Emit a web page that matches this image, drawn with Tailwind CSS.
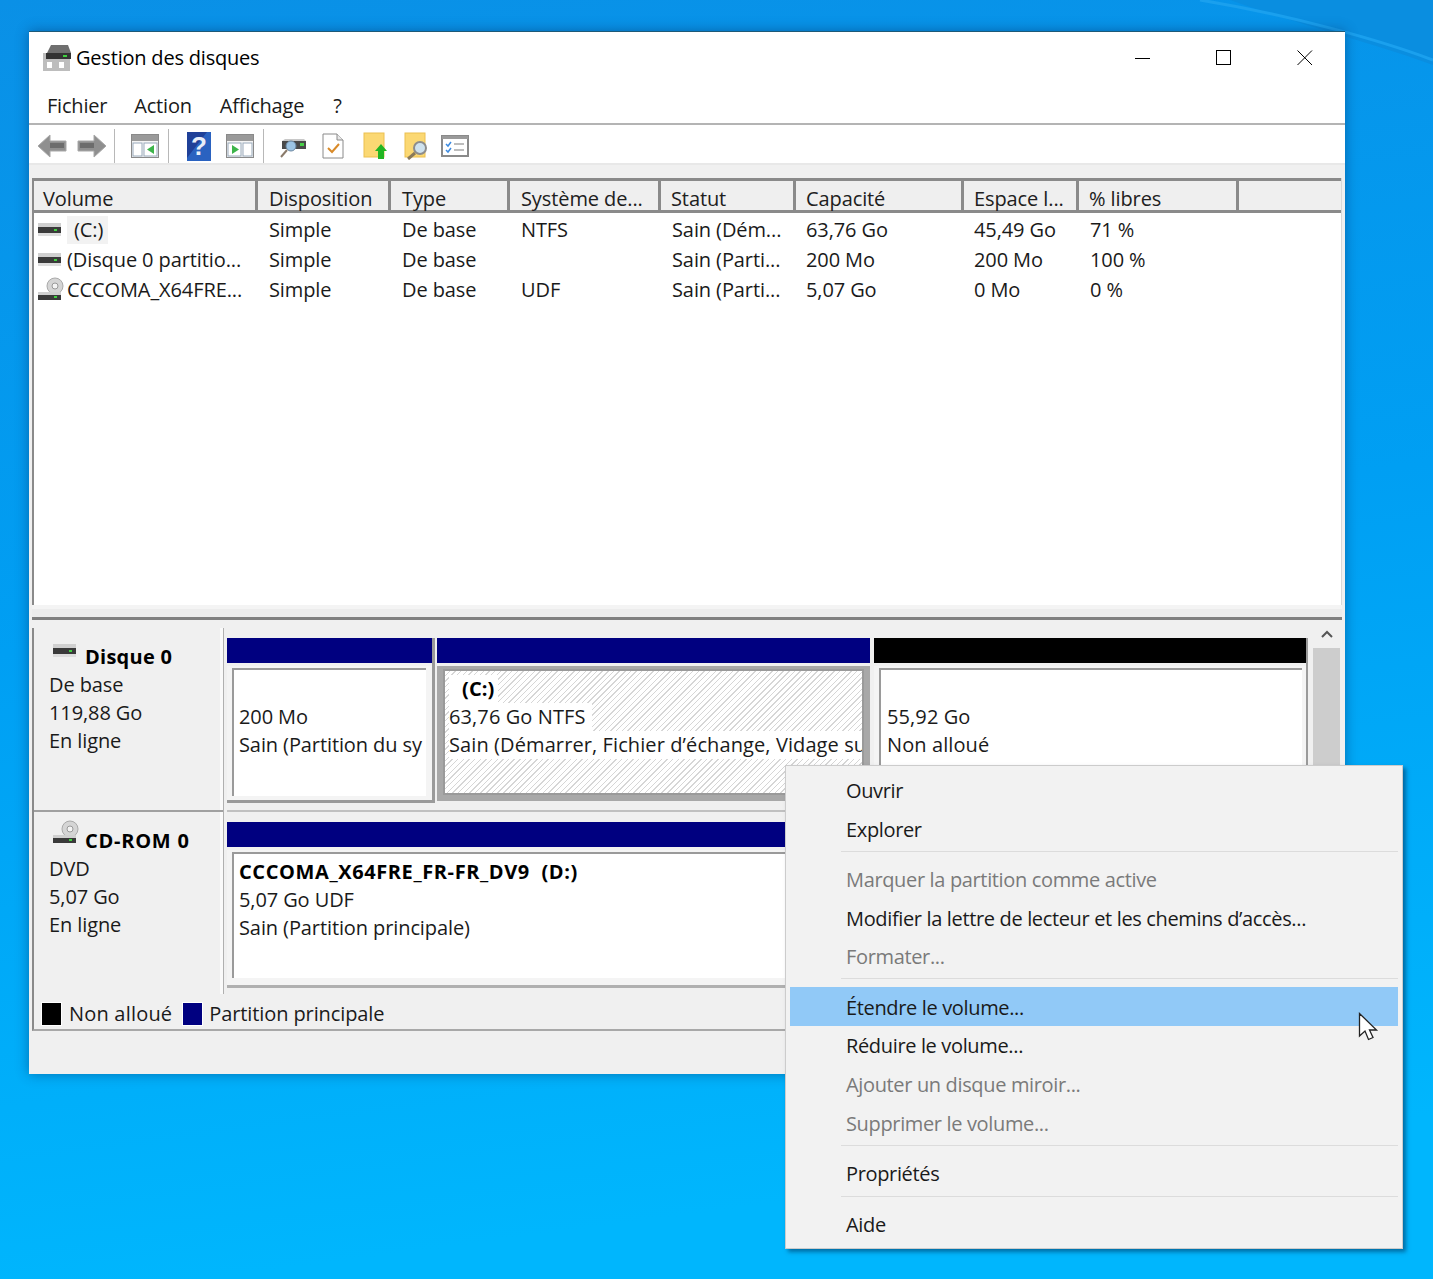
<!DOCTYPE html>
<html lang="fr">
<head>
<meta charset="UTF-8">
<title>Gestion des disques</title>
<script src="https://cdn.jsdelivr.net/npm/@tailwindcss/browser@4"></script>
</head>
<body class="w-[1433px] h-[1279px] overflow-hidden relative bg-[#00a2f5] font-['Open_Sans',sans-serif] text-[20px] leading-[28px] text-[#1a1a1a] tracking-[-0.1px]">
<svg class="absolute inset-0" width="1433" height="1279"><defs><linearGradient id="bg" x1="0" y1="0" x2="0.15" y2="1"><stop offset="0" stop-color="#0a90e6"/><stop offset=".5" stop-color="#009ff3"/><stop offset="1" stop-color="#00b6fd"/></linearGradient></defs><rect width="1433" height="1279" fill="url(#bg)"/><path d="M1230 0C1300 25 1380 45 1433 65V0Z" fill="#0a8ee0"/><path d="M1200 0C1290 15 1380 40 1433 60" stroke="#1aa0ee" stroke-width="3" fill="none"/></svg>

<!-- fenetre -->
<div class="absolute left-[29px] top-[31px] w-[1316px] h-[1043px] bg-[#f0f0f0] flex flex-col shadow-[0_0_12px_rgba(0,40,90,0.45)] border-t border-[#1e5a78]">
  <div class="h-[52px] bg-white flex items-center shrink-0">
    <svg class="ml-[13px]" width="30" height="28" viewBox="0 0 30 28"><path d="M5 9 9 1H26L29 9V11H5Z" fill="#6f6f6f"/><rect x="1" y="9" width="27" height="18" fill="#bdbdbd"/><rect x="4" y="9" width="25" height="6" fill="#333"/><rect x="21" y="11" width="4" height="2" fill="#3fd03f"/><rect x="5" y="18" width="5" height="6" fill="#fff"/><rect x="17" y="18" width="5" height="6" fill="#fff"/></svg>
    <span class="ml-[4px] text-[#000] tracking-[-0.2px]">Gestion des disques</span>
    <div class="ml-auto flex items-center">
      <div class="w-[81px] h-[52px] flex items-center justify-center"><svg width="16" height="16"><path d="M0 8.500H15" stroke="#000"/></svg></div>
      <div class="w-[81px] h-[52px] flex items-center justify-center"><svg width="16" height="16"><rect x=".5" y=".5" width="14" height="14" fill="none" stroke="#000"/></svg></div>
      <div class="w-[81px] h-[52px] flex items-center justify-center"><svg width="16" height="16"><path d="M.5.5 15 15M15 .5 .5 15" stroke="#000"/></svg></div>
    </div>
  </div>
  <div class="h-[41px] bg-white flex items-center pl-[18px] gap-[27px] shrink-0 border-b-2 border-[#b4b4b4] pt-[4px] tracking-[-0.2px]">
    <span>Fichier</span><span>Action</span><span class="ml-[1px]">Affichage</span><span class="ml-[2px]">?</span>
  </div>
  <div class="h-[40px] bg-white flex items-center shrink-0 border-b-2 border-[#e8e8e8] pt-[4px]">
    <svg class="ml-[8px]" width="30" height="26" viewBox="0 0 30 26"><path d="M1 13 13 2V8H29V18H13V24Z" fill="#8f8f8f" stroke="#a8a8a8"/><rect x="13" y="10" width="14" height="5" fill="#6c6c6c"/></svg>
    <svg class="ml-[10px]" width="30" height="26" viewBox="0 0 30 26"><path d="M29 13 17 2V8H1V18H17V24Z" fill="#8f8f8f" stroke="#a8a8a8"/><rect x="3" y="10" width="14" height="5" fill="#6c6c6c"/></svg>
    <div class="ml-[7px] w-px h-[34px] bg-[#b8b8b8]"></div>
    <svg class="ml-[16px]" width="28" height="24" viewBox="0 0 28 24"><rect x=".5" y=".5" width="27" height="23" fill="#f4f4f4" stroke="#8a8a8a"/><rect x="1" y="1" width="26" height="6" fill="#9a9a9a"/><rect x="2" y="9" width="9" height="13" fill="#fff" stroke="#9ab"/><rect x="13" y="9" width="13" height="13" fill="#fff" stroke="#9ab"/><path d="M23 11V20L16 15.500Z" fill="#3cb44a"/></svg>
    <div class="ml-[9px] w-px h-[34px] bg-[#b8b8b8]"></div>
    <svg class="ml-[18px]" width="24" height="29" viewBox="0 0 24 29"><rect width="24" height="29" fill="#1f4098"/><path d="M20 0H24V29H0V26Z" fill="#2a62c0"/><text x="12" y="23" text-anchor="middle" font-size="26" font-weight="700" fill="#e8eef8" font-family="Liberation Sans">?</text></svg>
    <svg class="ml-[15px]" width="28" height="24" viewBox="0 0 28 24"><rect x=".5" y=".5" width="27" height="23" fill="#f4f4f4" stroke="#8a8a8a"/><rect x="1" y="1" width="26" height="6" fill="#9a9a9a"/><rect x="2" y="9" width="13" height="13" fill="#fff" stroke="#9ab"/><rect x="17" y="9" width="9" height="13" fill="#fff" stroke="#9ab"/><path d="M6 11V20L13 15.500Z" fill="#3cb44a"/></svg>
    <div class="ml-[9px] w-px h-[34px] bg-[#b8b8b8]"></div>
    <svg class="ml-[16px]" width="28" height="26" viewBox="0 0 28 26"><path d="M2 8H26V16H2Z" fill="#4a4a4a"/><path d="M5 6H24L26 8H2Z" fill="#c8c8c8"/><rect x="20" y="10" width="4" height="3" fill="#48d048"/><circle cx="11" cy="13" r="5" fill="#9cc4e4" stroke="#6a86a0"/><path d="M7 17 1 24" stroke="#8a7a6a" stroke-width="2"/></svg>
    <svg class="ml-[14px]" width="22" height="26" viewBox="0 0 22 26"><path d="M1 1H15L21 7V25H1Z" fill="#fff" stroke="#8a8a8a"/><path d="M15 1V7H21" fill="#e8e8e8" stroke="#8a8a8a"/><path d="M6 15 10 19 17 11" fill="none" stroke="#d98a28" stroke-width="2"/></svg>
    <svg class="ml-[19px]" width="24" height="28" viewBox="0 0 24 28"><rect x="1" y="1" width="20" height="24" fill="#fbd873" stroke="#ecc050"/><path d="M18 12 24 19H21V27H15V19H12Z" fill="#22b522"/></svg>
    <svg class="ml-[17px]" width="26" height="28" viewBox="0 0 26 28"><rect x="1" y="1" width="20" height="24" fill="#fbd873" stroke="#ecc050"/><circle cx="16" cy="16" r="6" fill="#cfe2ee" stroke="#8d8d8d" stroke-width="2"/><path d="M11 21 4 27" stroke="#8a7a5a" stroke-width="3"/></svg>
    <svg class="ml-[11px]" width="28" height="22" viewBox="0 0 28 22"><rect x="1" y="1" width="26" height="20" fill="#fff" stroke="#8a8a8a" stroke-width="2"/><rect x="1" y="1" width="26" height="3" fill="#9a9a9a"/><path d="M5 9 7 11 10 7M5 15 7 17 10 13" fill="none" stroke="#3c8ae0" stroke-width="1.500"/><path d="M13 9H23M13 15H23" stroke="#a8a8a8" stroke-width="1.500"/></svg>
  </div>

  <!-- liste des volumes -->
  <div class="mt-[13px] mx-[3px] h-[427px] shrink-0 bg-white flex flex-col border-l-2 border-l-[#8a8a8a] border-r border-r-[#d8d8d8]">
    <div class="h-[35px] shrink-0 flex bg-[#efefef] border-y-[3px] border-[#8a8a8a] text-[#202020]">
      <div class="w-[224px] pl-[9px] pt-[4px] border-r-[3px] border-[#8a8a8a]">Volume</div>
      <div class="w-[133px] pl-[11px] pt-[4px] border-r-[3px] border-[#8a8a8a]">Disposition</div>
      <div class="w-[119px] pl-[11px] pt-[4px] border-r-[3px] border-[#8a8a8a]">Type</div>
      <div class="w-[151px] pl-[11px] pt-[4px] border-r-[3px] border-[#8a8a8a]">Système de...</div>
      <div class="w-[135px] pl-[10px] pt-[4px] border-r-[3px] border-[#8a8a8a]">Statut</div>
      <div class="w-[168px] pl-[10px] pt-[4px] border-r-[3px] border-[#8a8a8a]">Capacité</div>
      <div class="w-[115px] pl-[10px] pt-[4px] border-r-[3px] border-[#8a8a8a]">Espace l...</div>
      <div class="w-[160px] pl-[10px] pt-[4px] border-r-[3px] border-[#8a8a8a]">% libres</div>
    </div>
    <div class="h-[30px] mt-[2px] flex items-center">
      <div class="w-[225px] flex items-center pl-[4px]"><svg width="24" height="14" viewBox="0 0 24 14"><rect y="0" width="23" height="4" fill="#d0d0d0"/><rect y="4" width="23" height="6" fill="#3a3a3a"/><rect x="16" y="6" width="3" height="2" fill="#3fd03f"/><rect y="10" width="23" height="3" fill="#ddd"/></svg><span class="ml-[5px] bg-[#f2f2f2] pl-[7px] pr-[5px]">(C:)</span></div>
      <div class="w-[133px] pl-[10px]">Simple</div><div class="w-[119px] pl-[10px]">De base</div><div class="w-[151px] pl-[10px]">NTFS</div><div class="w-[135px] pl-[10px] whitespace-nowrap">Sain (Dém...</div><div class="w-[168px] pl-[9px]">63,76 Go</div><div class="w-[115px] pl-[9px]">45,49 Go</div><div class="w-[160px] pl-[10px]">71 %</div>
    </div>
    <div class="h-[30px] flex items-center">
      <div class="w-[225px] flex items-center pl-[4px]"><svg width="24" height="14" viewBox="0 0 24 14"><rect y="0" width="23" height="4" fill="#d0d0d0"/><rect y="4" width="23" height="6" fill="#3a3a3a"/><rect x="16" y="6" width="3" height="2" fill="#3fd03f"/><rect y="10" width="23" height="3" fill="#ddd"/></svg><span class="ml-[5px] whitespace-nowrap">(Disque 0 partitio...</span></div>
      <div class="w-[133px] pl-[10px]">Simple</div><div class="w-[119px] pl-[10px]">De base</div><div class="w-[151px] pl-[10px]"></div><div class="w-[135px] pl-[10px] whitespace-nowrap">Sain (Parti...</div><div class="w-[168px] pl-[9px]">200 Mo</div><div class="w-[115px] pl-[9px]">200 Mo</div><div class="w-[160px] pl-[10px]">100 %</div>
    </div>
    <div class="h-[30px] flex items-center">
      <div class="w-[225px] flex items-center pl-[4px]"><svg width="26" height="26" viewBox="0 0 26 26"><circle cx="17" cy="9" r="8" fill="#d5d5d5" stroke="#aaa"/><circle cx="17" cy="9" r="3" fill="#f4f4f4" stroke="#999"/><rect y="15" width="23" height="3" fill="#d0d0d0"/><rect y="18" width="23" height="5" fill="#3a3a3a"/><rect x="16" y="19" width="3" height="2" fill="#3fd03f"/></svg><span class="ml-[3px] whitespace-nowrap">CCCOMA_X64FRE...</span></div>
      <div class="w-[133px] pl-[10px]">Simple</div><div class="w-[119px] pl-[10px]">De base</div><div class="w-[151px] pl-[10px]">UDF</div><div class="w-[135px] pl-[10px] whitespace-nowrap">Sain (Parti...</div><div class="w-[168px] pl-[9px]">5,07 Go</div><div class="w-[115px] pl-[9px]">0 Mo</div><div class="w-[160px] pl-[10px]">0 %</div>
    </div>
  </div>
  <div class="mx-[3px] h-[15px] shrink-0 bg-[#ececec] border-t-[4px] border-[#f4f4f4] border-b-[3px] border-b-[#7f7f7f]"></div>

  <!-- disques -->
  <div class="flex mx-[3px] h-[366px] shrink-0 mt-[8px] border-l-2 border-[#8a8a8a]">
    <div class="w-[190px] shrink-0 flex flex-col border-r border-[#b0b0b0] shadow-[inset_-3px_0_0_#fafafa]">
      <div class="h-[184px] shrink-0 border-b-2 border-[#a0a0a0] pl-[15px] pt-[15px]">
        <div class="flex items-start"><svg class="ml-[4px] mt-[1px]" width="24" height="14" viewBox="0 0 24 14"><rect y="0" width="23" height="4" fill="#d0d0d0"/><rect y="4" width="23" height="6" fill="#3a3a3a"/><rect x="16" y="6" width="3" height="2" fill="#3fd03f"/><rect y="10" width="23" height="3" fill="#ddd"/></svg><span class="ml-[8px] font-bold text-black tracking-[0.25px]">Disque 0</span></div>
        <div>De base</div><div>119,88 Go</div><div>En ligne</div>
      </div>
      <div class="flex-1 pl-[15px] pt-[15px]">
        <div class="flex items-start"><svg class="ml-[4px] -mt-[7px]" width="26" height="26" viewBox="0 0 26 26"><circle cx="17" cy="9" r="8" fill="#d5d5d5" stroke="#aaa"/><circle cx="17" cy="9" r="3" fill="#f4f4f4" stroke="#999"/><rect y="15" width="23" height="3" fill="#d0d0d0"/><rect y="18" width="23" height="5" fill="#3a3a3a"/><rect x="16" y="19" width="3" height="2" fill="#3fd03f"/></svg><span class="ml-[6px] font-bold text-black tracking-[0.75px]">CD-ROM 0</span></div>
        <div>DVD</div><div>5,07 Go</div><div>En ligne</div>
      </div>
    </div>
    <div class="flex-1 min-w-0 flex flex-col pl-[3px]">
      <div class="h-[184px] shrink-0 border-b-[2px] border-[#c0c0c0] pt-[10px] pb-[7px] flex gap-[4px]">
        <div class="w-[208px] flex flex-col shrink-0 border-r-[3px] border-[#9a9a9a]">
          <div class="h-[25px] bg-[#000080] shrink-0"></div>
          <div class="flex-1 mt-[3px] border-b-[3px] border-[#9a9a9a] bg-[#f4f4f4] pl-[5px] pr-[6px] pt-[2px] pb-[4px]">
            <div class="h-full bg-white border-l-[2px] border-t-[2px] border-[#9a9a9a] pl-[5px] pt-[33px] overflow-hidden whitespace-nowrap"><div>200 Mo</div><div>Sain (Partition du sy</div></div>
          </div>
        </div>
        <div class="w-[433px] flex flex-col shrink-0 -ml-[2px]">
          <div class="h-[25px] bg-[#000080] shrink-0"></div>
          <div class="flex-1 mt-[3px] mb-[2px] bg-[#a8a8a8] pl-[6px] pr-[6px] pt-[3px] pb-[6px]">
            <div class="h-full border-2 border-[#9a9a9a] bg-[repeating-linear-gradient(135deg,#fff_0,#fff_3px,#d6d6d6_3px,#d6d6d6_4px)] pl-[4px] pt-[4px] overflow-hidden whitespace-nowrap tracking-[0.1px]">
              <div><span class="inline-block bg-white pl-[13px] pr-[4px] font-bold text-black">(C:)</span></div>
              <div><span class="inline-block bg-white pr-[6px]">63,76 Go NTFS</span></div>
              <div><span class="inline-block bg-white">Sain (Démarrer, Fichier d’échange, Vidage su</span></div>
            </div>
          </div>
        </div>
        <div class="w-[434px] flex flex-col shrink-0 border-r-2 border-[#9a9a9a]">
          <div class="h-[25px] bg-black shrink-0"></div>
          <div class="flex-1 mt-[3px] bg-[#f4f4f4] pl-[5px] pr-[4px] pt-[2px]">
            <div class="h-full bg-white border-l-[2px] border-t-[2px] border-[#9a9a9a] pl-[6px] pt-[33px] tracking-[0.1px]"><div>55,92 Go</div><div>Non alloué</div></div>
          </div>
        </div>
      </div>
      <div class="flex-1 pt-[10px] pb-[6px] flex flex-col">
        <div class="h-[25px] bg-[#000080] shrink-0"></div>
        <div class="flex-1 mt-[3px] bg-[#f4f4f4] pl-[5px] pt-[2px] pb-[7px] border-b-[3px] border-[#b0b0b0]">
          <div class="h-full bg-white border-l-[2px] border-t-[2px] border-[#9a9a9a] pl-[5px] pt-[4px]"><div class="font-bold text-black whitespace-pre tracking-[0.6px]">CCCOMA_X64FRE_FR-FR_DV9  (D:)</div><div>5,07 Go UDF</div><div>Sain (Partition principale)</div></div>
        </div>
      </div>
    </div>
    <div class="w-[27px] shrink-0 flex flex-col ml-[5px] mr-[2px]">
      <div class="h-[20px] flex justify-center"><svg class="mt-[1px]" width="14" height="10"><path d="M2 8 7 3 12 8" fill="none" stroke="#555" stroke-width="2"/></svg></div>
      <div class="flex-1 bg-[#cdcdcd]"></div>
    </div>
  </div>
  <div class="mx-[3px] h-[37px] shrink-0 flex items-center pl-[7px] pt-[5px] border-l-2 border-l-[#8a8a8a] border-b-2 border-b-[#a8a8a8]">
    <span class="w-[21px] h-[24px] bg-black border border-white"></span><span class="ml-[7px] tracking-[0.2px]">Non alloué</span>
    <span class="ml-[10px] w-[21px] h-[24px] bg-[#000080] border border-white"></span><span class="ml-[6px]">Partition principale</span>
  </div>
</div>

<!-- menu contextuel -->
<div class="absolute left-[785px] top-[765px] w-[618px] h-[484px] bg-[#f2f2f2] border border-[#cccccc] shadow-[3px_3px_4px_rgba(0,40,80,0.5)] px-[4px] pt-[6px] tracking-[-0.35px]">
  <div class="h-[38.5px] pl-[56px] flex items-center">Ouvrir</div>
  <div class="h-[38.5px] pl-[56px] flex items-center">Explorer</div>
  <div class="ml-[51px] mt-[2px] mb-[9px] h-[1px] bg-[#dcdcdc]"></div>
  <div class="h-[38.5px] pl-[56px] flex items-center text-[#7a7a7a]">Marquer la partition comme active</div>
  <div class="h-[38.5px] pl-[56px] flex items-center">Modifier la lettre de lecteur et les chemins d’accès...</div>
  <div class="h-[38.5px] pl-[56px] flex items-center text-[#7a7a7a]">Formater...</div>
  <div class="ml-[51px] mt-[1.5px] mb-[8px] h-[1px] bg-[#dcdcdc]"></div>
  <div class="h-[39px] pl-[56px] pt-[2px] flex items-center bg-[#91c9f7]">Étendre le volume...</div>
  <div class="h-[39px] pl-[56px] flex items-center">Réduire le volume...</div>
  <div class="h-[39px] pl-[56px] flex items-center text-[#7a7a7a]">Ajouter un disque miroir...</div>
  <div class="h-[39px] pl-[56px] flex items-center text-[#7a7a7a]">Supprimer le volume...</div>
  <div class="ml-[51px] mt-[2px] mb-[9px] h-[1px] bg-[#dcdcdc]"></div>
  <div class="h-[38.5px] pl-[56px] flex items-center">Propriétés</div>
  <div class="ml-[51px] mt-[2.5px] mb-[8.5px] h-[1px] bg-[#dcdcdc]"></div>
  <div class="h-[38.5px] pl-[56px] flex items-center">Aide</div>
</div>

<!-- curseur -->
<svg class="absolute left-[1358px] top-[1012px]" width="22" height="30" viewBox="0 0 22 30"><path d="M1.500 1.500V24L7 19 10.500 27.500 15 25.500 11.500 18H18.500Z" fill="#fff" stroke="#222" stroke-width="1.300"/></svg>
</body>
</html>
